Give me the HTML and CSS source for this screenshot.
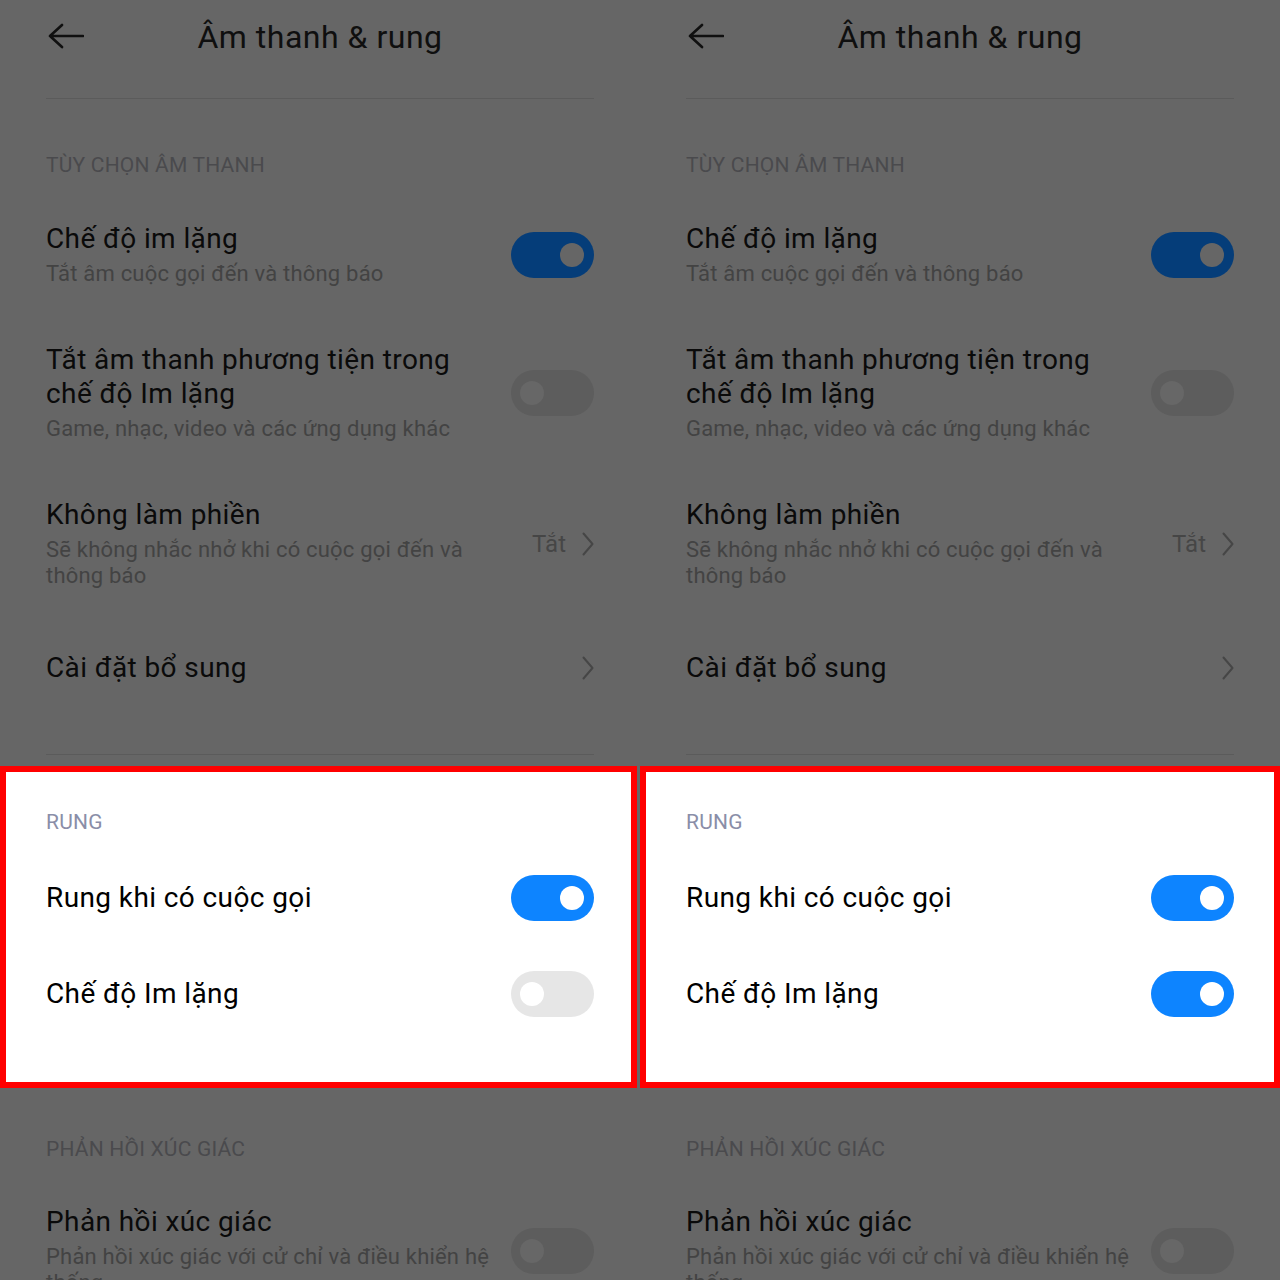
FILE: index.html
```html
<!DOCTYPE html>
<html lang="vi">
<head>
<meta charset="utf-8">
<title>Âm thanh &amp; rung</title>
<link rel="stylesheet" href="styles.css">
</head>
<body>
<div class="screen">

  <section class="panel">
    <header class="topbar">
      <svg class="back" width="36" height="26" viewBox="0 0 36 26"><path d="M35 13H2M14 2L2 13l12 11" fill="none" stroke="#101010" stroke-width="2.6" stroke-linecap="round" stroke-linejoin="round"/></svg>
      <h1 class="title">Âm thanh &amp; rung</h1>
    </header>
    <div class="divider divider-top"></div>

    <div class="section-label">TÙY CHỌN ÂM THANH</div>
    <div class="row">
      <div class="row-text"><div class="row-title">Chế độ im lặng</div><div class="row-sub">Tắt âm cuộc gọi đến và thông báo</div></div>
      <span class="toggle on"></span>
    </div>
    <div class="row">
      <div class="row-text"><div class="row-title">Tắt âm thanh phương tiện trong chế độ Im lặng</div><div class="row-sub">Game, nhạc, video và các ứng dụng khác</div></div>
      <span class="toggle"></span>
    </div>
    <div class="row">
      <div class="row-text"><div class="row-title">Không làm phiền</div><div class="row-sub">Sẽ không nhắc nhở khi có cuộc gọi đến và thông báo</div></div>
      <div class="row-value"><span class="value-text">Tắt</span><svg class="chev" width="12" height="24" viewBox="0 0 12 24"><path d="M1.5 1.5L10.5 12L1.5 22.5" fill="none" stroke="#464646" stroke-width="2" stroke-linecap="round" stroke-linejoin="round"/></svg></div>
    </div>
    <div class="row">
      <div class="row-text"><div class="row-title">Cài đặt bổ sung</div></div>
      <div class="row-value"><svg class="chev" width="12" height="24" viewBox="0 0 12 24"><path d="M1.5 1.5L10.5 12L1.5 22.5" fill="none" stroke="#464646" stroke-width="2" stroke-linecap="round" stroke-linejoin="round"/></svg></div>
    </div>
    <div class="divider divider-bottom"></div>

    <div class="highlight highlight-left">
      <div class="section-label label-lit">RUNG</div>
      <div class="row row-single">
        <div class="row-text"><div class="row-title title-lit">Rung khi có cuộc gọi</div></div>
        <span class="toggle lit on"></span>
      </div>
      <div class="row row-single">
        <div class="row-text"><div class="row-title title-lit">Chế độ Im lặng</div></div>
        <span class="toggle lit"></span>
      </div>
    </div>

    <div class="section-label label-after">PHẢN HỒI XÚC GIÁC</div>
    <div class="row">
      <div class="row-text"><div class="row-title">Phản hồi xúc giác</div><div class="row-sub">Phản hồi xúc giác với cử chỉ và điều khiển hệ thống</div></div>
      <span class="toggle"></span>
    </div>
  </section>

  <section class="panel">
    <header class="topbar">
      <svg class="back" width="36" height="26" viewBox="0 0 36 26"><path d="M35 13H2M14 2L2 13l12 11" fill="none" stroke="#101010" stroke-width="2.6" stroke-linecap="round" stroke-linejoin="round"/></svg>
      <h1 class="title">Âm thanh &amp; rung</h1>
    </header>
    <div class="divider divider-top"></div>

    <div class="section-label">TÙY CHỌN ÂM THANH</div>
    <div class="row">
      <div class="row-text"><div class="row-title">Chế độ im lặng</div><div class="row-sub">Tắt âm cuộc gọi đến và thông báo</div></div>
      <span class="toggle on"></span>
    </div>
    <div class="row">
      <div class="row-text"><div class="row-title">Tắt âm thanh phương tiện trong chế độ Im lặng</div><div class="row-sub">Game, nhạc, video và các ứng dụng khác</div></div>
      <span class="toggle"></span>
    </div>
    <div class="row">
      <div class="row-text"><div class="row-title">Không làm phiền</div><div class="row-sub">Sẽ không nhắc nhở khi có cuộc gọi đến và thông báo</div></div>
      <div class="row-value"><span class="value-text">Tắt</span><svg class="chev" width="12" height="24" viewBox="0 0 12 24"><path d="M1.5 1.5L10.5 12L1.5 22.5" fill="none" stroke="#464646" stroke-width="2" stroke-linecap="round" stroke-linejoin="round"/></svg></div>
    </div>
    <div class="row">
      <div class="row-text"><div class="row-title">Cài đặt bổ sung</div></div>
      <div class="row-value"><svg class="chev" width="12" height="24" viewBox="0 0 12 24"><path d="M1.5 1.5L10.5 12L1.5 22.5" fill="none" stroke="#464646" stroke-width="2" stroke-linecap="round" stroke-linejoin="round"/></svg></div>
    </div>
    <div class="divider divider-bottom"></div>

    <div class="highlight highlight-right">
      <div class="section-label label-lit">RUNG</div>
      <div class="row row-single">
        <div class="row-text"><div class="row-title title-lit">Rung khi có cuộc gọi</div></div>
        <span class="toggle lit on"></span>
      </div>
      <div class="row row-single">
        <div class="row-text"><div class="row-title title-lit">Chế độ Im lặng</div></div>
        <span class="toggle lit on"></span>
      </div>
    </div>

    <div class="section-label label-after">PHẢN HỒI XÚC GIÁC</div>
    <div class="row">
      <div class="row-text"><div class="row-title">Phản hồi xúc giác</div><div class="row-sub">Phản hồi xúc giác với cử chỉ và điều khiển hệ thống</div></div>
      <span class="toggle"></span>
    </div>
  </section>

</div>
</body>
</html>
```

FILE: styles.css
```css
* { box-sizing: border-box; }

html, body {
  margin: 0;
  padding: 0;
  background: #666666;
}

body {
  width: 1280px;
  height: 1280px;
  overflow: hidden;
  font-family: Roboto, "Noto Sans", "DejaVu Sans", sans-serif;
}

.screen {
  display: flex;
  width: 1280px;
  height: 1280px;
  overflow: hidden;
}

.panel {
  width: 640px;
  flex: none;
  display: flex;
  flex-direction: column;
  background: #666666;
  padding: 0 46px;
}

.panel > * {
  flex-shrink: 0;
}

.topbar {
  height: 72px;
  display: grid;
  grid-template-columns: 1fr auto 1fr;
  align-items: center;
}

.back {
  display: block;
  margin-left: 2px;
}

.title {
  margin: 0;
  font-size: 32px;
  font-weight: 400;
  letter-spacing: 0.5px;
  color: #0f0f0f;
  line-height: 40px;
  padding-top: 2px;
}

.divider {
  height: 1px;
  background: #5b5b5b;
}

.divider-top { margin-top: 26px; }
.divider-bottom { margin-top: 35px; }

.section-label {
  margin-top: 54px;
  margin-bottom: 17px;
  font-size: 21px;
  letter-spacing: 0.2px;
  line-height: 24px;
  color: #4a4a4d;
}

.label-lit {
  margin-top: 0;
  margin-bottom: 16px;
  color: #8a8ea8;
}

.label-after {
  margin-top: 49px;
  margin-bottom: 16px;
}

.row {
  display: flex;
  align-items: center;
  padding: 28px 0;
  min-height: 102px;
}

.row-single {
  padding: 25px 0;
  min-height: 96px;
}

.row-text {
  width: 446px;
  flex: none;
}

.row-title {
  font-size: 28px;
  letter-spacing: 0.4px;
  line-height: 34px;
  color: #0a0a0a;
}

.title-lit { color: #000000; }

.row-sub {
  margin-top: 5px;
  font-size: 22px;
  letter-spacing: 0.2px;
  line-height: 26px;
  color: #434343;
}

.row-value {
  margin-left: auto;
  display: flex;
  align-items: center;
  gap: 16px;
}

.value-text {
  font-size: 24px;
  line-height: 30px;
  color: #464646;
}

.chev { display: block; }

.toggle {
  margin-left: auto;
  position: relative;
  width: 83px;
  height: 46px;
  flex: none;
  border-radius: 23px;
  background: #5d5d5d;
}

.toggle::after {
  content: "";
  position: absolute;
  top: 11px;
  left: 9px;
  width: 24px;
  height: 24px;
  border-radius: 50%;
  background: #676767;
}

.toggle.on { background: #053d79; }
.toggle.on::after { left: auto; right: 10px; background: #666666; }

.toggle.lit { background: #e6e6e6; }
.toggle.lit::after { background: #ffffff; }
.toggle.lit.on { background: #0d84ff; }

.highlight {
  margin-top: 11px;
  margin-left: -46px;
  background: #ffffff;
  border: 6px solid #ff0000;
  padding: 38px 37px 40px 40px;
}

.highlight-left {
  margin-right: -43px;
}

.highlight-right {
  margin-right: -46px;
  padding-right: 40px;
}
```
